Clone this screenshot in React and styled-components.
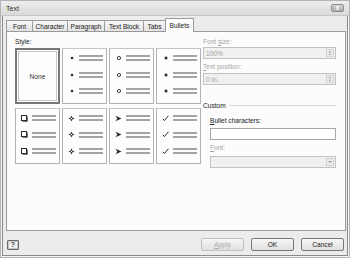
import React from "react";
import styled, { createGlobalStyle } from "styled-components";

const GlobalStyle = createGlobalStyle`
  body {
    margin: 0;
    font-family: "Liberation Sans", Arial, sans-serif;
  }
`;

const Window = styled.div`
  width: 350px;
  height: 258px;
  box-sizing: border-box;
  border: 1px solid #b4b4b4;
  box-shadow: inset 0 0 0 1px #f4f4f4, inset 0 0 0 2px #8a8a8a;
  background: #ececec;
  display: flex;
  flex-direction: column;
  font-size: 6.6px;
  color: #222;
`;

const TitleBar = styled.div`
  height: 14px;
  display: flex;
  align-items: center;
  justify-content: space-between;
  padding: 0 5px 0 5px;
  background: linear-gradient(#ededed, #dadada);
  border-bottom: 1px solid #c8c8c8;
  font-size: 7px;
  color: #333;
`;

const CloseButton = styled.div`
  width: 13px;
  height: 8px;
  box-sizing: border-box;
  border: 1px solid #8e8e8e;
  border-radius: 2px;
  background: linear-gradient(#d4d4d4, #a9a9a9);
  color: #fff;
  font-size: 7px;
  line-height: 5px;
  text-align: center;
  font-weight: bold;
`;

const Body = styled.div`
  flex: 1;
  display: flex;
  flex-direction: column;
  padding: 0 3px 0 5px;
`;

const TabRow = styled.div`
  display: flex;
  align-items: flex-end;
  height: 13px;
  margin-top: 2px;
`;

const Tab = styled.div`
  position: relative;
  box-sizing: border-box;
  width: ${(p) => p.$w}px;
  height: ${(p) => (p.$active ? 14 : 11)}px;
  margin-right: -1px;
  margin-bottom: ${(p) => (p.$active ? -1 : 0)}px;
  z-index: ${(p) => (p.$active ? 1 : 0)};
  border: 1px solid #9a9a9a;
  border-bottom: none;
  border-radius: 1px 1px 0 0;
  background: ${(p) =>
    p.$active ? "#fcfcfc" : "linear-gradient(#f8f8f8, #e2e2e2)"};
  display: flex;
  align-items: center;
  justify-content: center;
  white-space: nowrap;
`;

const Panel = styled.div`
  box-sizing: border-box;
  height: 200px;
  border: 1px solid #9a9a9a;
  background: #fcfcfc;
  padding: 6px 9px 0 8px;
  display: grid;
  grid-template-columns: 188px 1fr;
`;

const Label = styled.div`
  line-height: 8px;
  margin-top: ${(p) => p.$mt || 0}px;
  color: ${(p) => (p.$disabled ? "#a6a6a6" : "#222")};
  white-space: nowrap;
`;

const StyleGrid = styled.div`
  margin-top: 2px;
  display: grid;
  grid-template-columns: repeat(4, 45px);
  grid-auto-rows: 56px;
  gap: 4px 2px;
`;

const Cell = styled.div`
  box-sizing: border-box;
  border: 1px solid #b2b2b2;
  border-top-color: #c6c6c6;
  background: #fdfdfd;
  padding: 6px 0 9px 5px;
  display: flex;
  flex-direction: column;
  justify-content: space-between;
`;

const NoneCell = styled.div`
  box-sizing: border-box;
  border: 2px solid #777;
  box-shadow: inset 0 0 0 1px #fff, inset 0 0 0 2px #c8c8c8;
  background: #fdfdfd;
  display: flex;
  align-items: center;
  justify-content: center;
  color: #333;
`;

const Item = styled.div`
  display: flex;
  align-items: center;
  height: 6px;
`;

const BulletSlot = styled.div`
  width: 7px;
  height: 6px;
  display: flex;
  align-items: center;
  justify-content: center;
`;

const Lines = styled.div`
  margin-left: 4px;
  width: 24px;
  height: 2px;
  border-top: 2px solid #a4a4a4;
  border-bottom: 2px solid #a4a4a4;
`;

const Side = styled.div`
  display: flex;
  flex-direction: column;
`;

const Field = styled.div`
  box-sizing: border-box;
  height: 12px;
  margin-top: ${(p) => p.$mt || 0}px;
  border: 1px solid ${(p) => (p.$disabled ? "#c2c2c2" : "#a7a7a7")};
  background: ${(p) => (p.$disabled ? "#f0f0f0" : "#fff")};
  color: #a2a2a2;
  display: flex;
  align-items: center;
  padding-left: 2px;
`;

const FieldEnd = styled.div`
  margin-left: auto;
  margin-right: 1px;
  width: 8px;
  height: 8px;
  box-sizing: border-box;
  border: 1px solid #d2d2d2;
  background: #ebebeb;
  display: flex;
  align-items: center;
  justify-content: center;
`;

const CustomHeader = styled.div`
  display: flex;
  align-items: center;
  margin-top: 16px;
  height: 8px;
  gap: 3px;
  &::after {
    content: "";
    flex: 1;
    border-top: 1px solid #d6d6d6;
  }
`;

const Indent = styled.div`
  display: flex;
  flex-direction: column;
  padding-left: 7px;
`;

const Footer = styled.div`
  display: flex;
  align-items: flex-start;
  padding: 7px 2px 0 1px;
`;

const HelpButton = styled.div`
  margin-top: 2px;
  width: 12px;
  height: 10px;
  box-sizing: border-box;
  border: 1px solid #6a6a6a;
  border-radius: 1px;
  background: #f2f2f2;
  box-shadow: inset 0 0 0 1px #c4c4c4;
  font-size: 7px;
  font-weight: bold;
  line-height: 8px;
  text-align: center;
  color: #444;
`;

const Buttons = styled.div`
  margin-left: auto;
  display: flex;
  gap: 7px;
`;

const Button = styled.div`
  box-sizing: border-box;
  width: 43px;
  height: 13px;
  border: 1px solid ${(p) => (p.$disabled ? "#c0c0c0" : "#777")};
  border-radius: 2px;
  background: linear-gradient(#f6f6f6, #e0e0e0);
  color: ${(p) => (p.$disabled ? "#a8a8a8" : "#222")};
  display: flex;
  align-items: center;
  justify-content: center;
`;

const Bullet = ({ kind }) => {
  const c = "#2a2a2a";
  switch (kind) {
    case "dot":
      return (
        <svg width="6" height="6" viewBox="0 0 6 6">
          <circle cx="3" cy="3" r="1.3" fill={c} />
        </svg>
      );
    case "ring":
      return (
        <svg width="6" height="6" viewBox="0 0 6 6">
          <circle cx="3" cy="3" r="1.6" fill="none" stroke={c} strokeWidth="0.9" />
        </svg>
      );
    case "square":
      return (
        <svg width="6" height="6" viewBox="0 0 6 6">
          <rect x="1.7" y="1.7" width="2.6" height="2.6" fill={c} />
        </svg>
      );
    case "box":
      return (
        <svg width="7" height="7" viewBox="0 0 7 7">
          <rect x="0.5" y="0.5" width="5" height="5" fill="#fff" stroke={c} strokeWidth="1" />
          <path d="M1.5 6.5 H6.5 V1.5" fill="none" stroke="#777" strokeWidth="1" />
        </svg>
      );
    case "diamond":
      return (
        <svg width="7" height="7" viewBox="0 0 7 7">
          <path d="M3.5 0.5 L4.5 2.5 L3.5 3 L2.5 2.5 Z" fill={c} />
          <path d="M3.5 6.5 L4.5 4.5 L3.5 4 L2.5 4.5 Z" fill={c} />
          <path d="M0.5 3.5 L2.5 2.5 L3 3.5 L2.5 4.5 Z" fill={c} />
          <path d="M6.5 3.5 L4.5 2.5 L4 3.5 L4.5 4.5 Z" fill={c} />
        </svg>
      );
    case "arrow":
      return (
        <svg width="7" height="7" viewBox="0 0 7 7">
          <path d="M0.5 0.8 L6.5 3.5 L0.5 6.2 L2.3 3.5 Z" fill={c} />
        </svg>
      );
    case "check":
      return (
        <svg width="7" height="7" viewBox="0 0 7 7">
          <path d="M0.8 3.8 L2.4 5.6 L6.4 0.8" fill="none" stroke={c} strokeWidth="1" />
        </svg>
      );
    default:
      return null;
  }
};

const Arrows = () => (
  <svg width="6" height="6" viewBox="0 0 6 6">
    <path d="M1.5 2.3 L3 0.8 L4.5 2.3 Z" fill="#9a9a9a" />
    <path d="M1.5 3.7 L3 5.2 L4.5 3.7 Z" fill="#9a9a9a" />
  </svg>
);

const Down = () => (
  <svg width="6" height="6" viewBox="0 0 6 6">
    <path d="M1.2 2 L3 4 L4.8 2 Z" fill="#9a9a9a" />
  </svg>
);

const tabs = [
  { name: "Font", w: 27 },
  { name: "Character", w: 36 },
  { name: "Paragraph", w: 38 },
  { name: "Text Block", w: 40 },
  { name: "Tabs", w: 23 },
  { name: "Bullets", w: 29, active: true }
];

const styles = ["dot", "ring", "square", "box", "diamond", "arrow", "check"];

function App() {
  return (
    <>
      <GlobalStyle />
      <Window>
        <TitleBar>
          <span>Text</span>
          <CloseButton>x</CloseButton>
        </TitleBar>
        <Body>
          <TabRow>
            {tabs.map((t) => (
              <Tab key={t.name} $w={t.w} $active={t.active}>
                {t.name}
              </Tab>
            ))}
          </TabRow>
          <Panel>
            <div>
              <Label>Style:</Label>
              <StyleGrid>
                <NoneCell>None</NoneCell>
                {styles.map((s) => (
                  <Cell key={s}>
                    {[0, 1, 2].map((i) => (
                      <Item key={i}>
                        <BulletSlot>
                          <Bullet kind={s} />
                        </BulletSlot>
                        <Lines />
                      </Item>
                    ))}
                  </Cell>
                ))}
              </StyleGrid>
            </div>
            <Side>
              <Label $disabled>
                Font <u>s</u>ize:
              </Label>
              <Field $disabled $mt={1}>
                100%
                <FieldEnd>
                  <Arrows />
                </FieldEnd>
              </Field>
              <Label $disabled $mt={4}>
                <u>T</u>ext position:
              </Label>
              <Field $disabled $mt={2}>
                0 in.
                <FieldEnd>
                  <Arrows />
                </FieldEnd>
              </Field>
              <CustomHeader>Custom</CustomHeader>
              <Indent>
                <Label $mt={8}>
                  <u>B</u>ullet characters:
                </Label>
                <Field $mt={3} />
                <Label $disabled $mt={4}>
                  <u>F</u>ont:
                </Label>
                <Field $disabled $mt={4}>
                  <FieldEnd>
                    <Down />
                  </FieldEnd>
                </Field>
              </Indent>
            </Side>
          </Panel>
          <Footer>
            <HelpButton>?</HelpButton>
            <Buttons>
              <Button $disabled>
                <u>A</u>pply
              </Button>
              <Button>OK</Button>
              <Button>Cancel</Button>
            </Buttons>
          </Footer>
        </Body>
      </Window>
    </>
  );
}

export default App;
